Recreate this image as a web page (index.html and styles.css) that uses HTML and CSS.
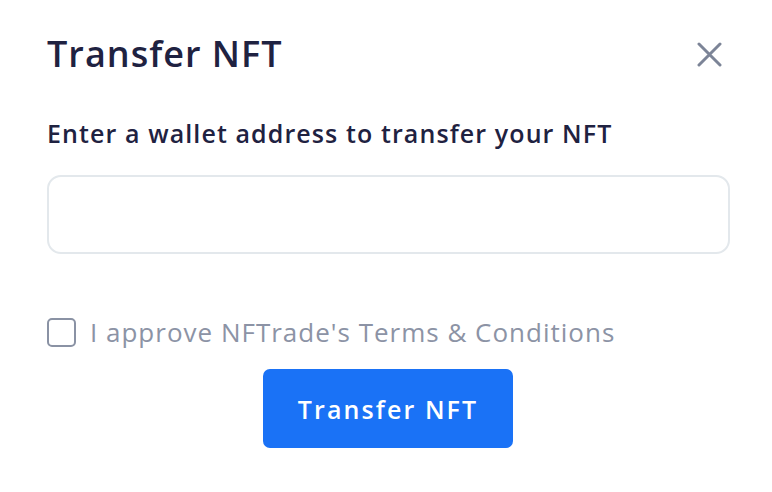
FILE: index.html
```html
<!DOCTYPE html>
<html>
<head>
<meta charset="utf-8">
<link rel="stylesheet" href="styles.css">
</head>
<body>
<div class="modal">
  <div class="header">
    <h1 class="title">Transfer NFT</h1>
    <button class="close" aria-label="Close">
      <svg width="25" height="25" viewBox="0 0 25 25"><path d="M2 2 L23 23 M23 2 L2 23" stroke="#7c8497" stroke-width="3" stroke-linecap="round"/></svg>
    </button>
  </div>
  <label class="label">Enter a wallet address to transfer your NFT</label>
  <input class="input" type="text">
  <label class="check-row">
    <span class="checkbox"></span>
    <span class="check-text">I approve NFTrade's Terms &amp; Conditions</span>
  </label>
  <div class="actions">
    <button class="btn">Transfer NFT</button>
  </div>
</div>
</body>
</html>
```
FILE: styles.css
```css
* { box-sizing: border-box; }
html, body { margin: 0; background: #fff; }
body { font-family: "Open Sans", "Liberation Sans", sans-serif; }
.modal {
  width: 772px;
  height: 492px;
  padding: 28px 43px 0 47px;
  display: flex;
  flex-direction: column;
}
.header {
  display: flex;
  justify-content: space-between;
  align-items: center;
}
.title {
  margin: 0;
  font-size: 36px;
  font-weight: 600;
  color: #1f2241;
  line-height: 52px;
  letter-spacing: 1px;
}
.close {
  border: 0;
  background: none;
  padding: 0;
  margin-right: 7px;
  width: 25px;
  height: 25px;
  display: flex;
}
.label {
  margin-top: 38px;
  font-size: 25px;
  font-weight: 600;
  color: #1f2241;
  line-height: 30px;
  letter-spacing: 1.1px;
}
.input {
  margin-top: 27px;
  width: 683px;
  height: 79px;
  border: 2px solid #e3e8ec;
  border-radius: 14px;
  outline: none;
}
.check-row {
  margin-top: 62px;
  display: flex;
  align-items: center;
  gap: 14px;
}
.checkbox {
  width: 29px;
  height: 29px;
  border: 2px solid #8a92a4;
  border-radius: 5px;
}
.check-text {
  font-size: 26px;
  color: #8c93a5;
  line-height: 32px;
  letter-spacing: 1px;
}
.actions {
  margin-top: 21px;
  display: flex;
  justify-content: center;
}
.btn {
  width: 250px;
  height: 79px;
  border: 0;
  border-radius: 7px;
  background: #1a72f6;
  color: #fff;
  font-family: inherit;
  font-size: 25px;
  font-weight: 600;
  letter-spacing: 2.1px;
}
```
